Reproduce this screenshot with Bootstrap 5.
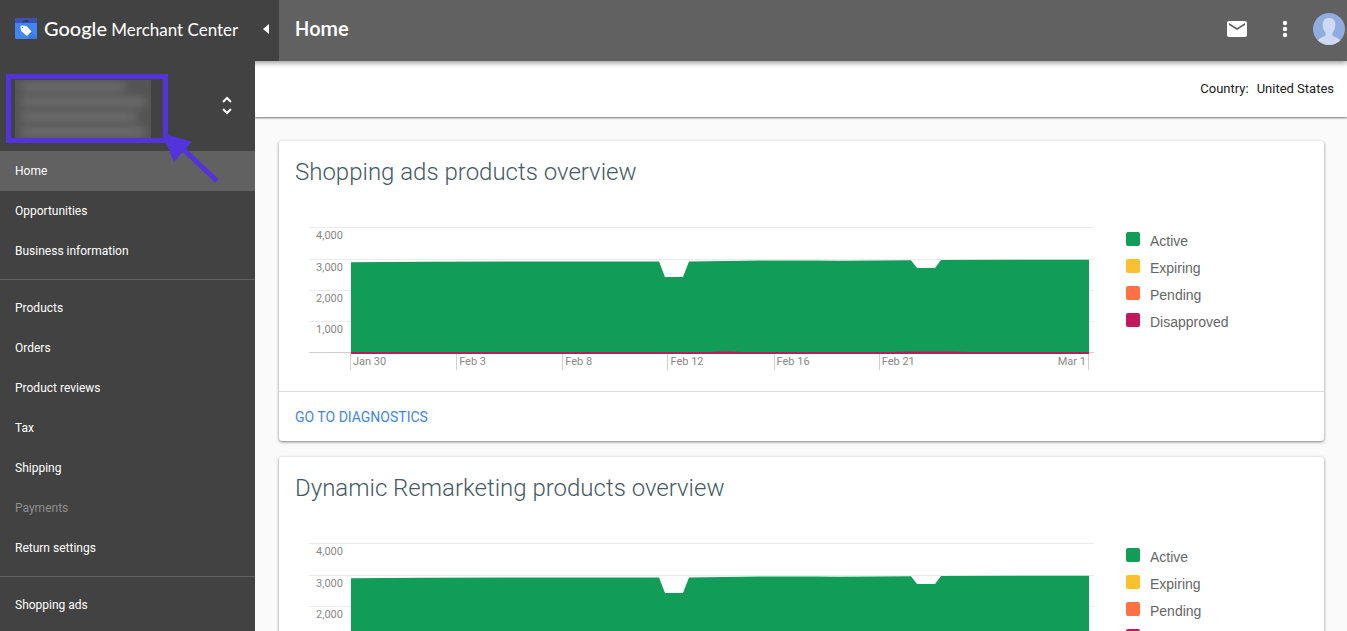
<!DOCTYPE html>
<html lang="en">
<head>
<meta charset="utf-8">
<meta name="viewport" content="width=device-width, initial-scale=1">
<title>Google Merchant Center</title>
<link rel="stylesheet" href="https://cdn.jsdelivr.net/npm/bootstrap@5.3.0/dist/css/bootstrap.min.css">
<style>
  body { font-family: Roboto, "Liberation Sans", sans-serif; font-size: 12px; line-height: 16px; background: #fafafa; color: #212121; }
  svg { display: block; }

  .topbar { background: #616161; height: 61px; z-index: 3; box-shadow: 0 2px 5px rgba(0,0,0,.4); }
  .brand-box { background: #424242; width: 279px; padding: 0 9px 4px 15px; }
  .brand-link { font-family: Lato, "Liberation Sans", sans-serif; font-size: 17px; line-height: 24px; color: #fff; gap: 7px; }
  .brand-link b { font-size: 20px; font-weight: 500; }
  .page-title { font-size: 20px; line-height: 24px; font-weight: 500; color: #fff; }
  .plain-btn { border: 0; background: none; padding: 0; color: #fff; }
  .tools { gap: 16px; padding-right: 2px; }

  .sidebar { background: #424242; width: 255px; z-index: 4; }
  .account { height: 90px; width: 100%; padding-left: 6px; padding-right: 22px; }
  .account-name { width: 162px; height: 69px; border: 5px solid #5333db; padding: 1px 14px 0 4px; }
  .redacted { background: #545454; height: 58px; width: 136px; overflow: hidden; padding: 3px 6px; }
  .redacted i { display: block; height: 8px; margin-bottom: 7px; background: #737373; filter: blur(5px); }
  .redacted i:first-child { margin-right: 20px; }
  .redacted i:nth-child(3) { margin-right: 8px; }
  .callout { position: absolute; left: 160px; top: 70px; z-index: 5; pointer-events: none; }
  .side-link { height: 40px; padding: 0 15px; color: #fff; font-weight: 400; display: flex; align-items: center; }
  .side-link:hover { color: #fff; background: #505050; }
  .side-link.active { background: #616161; }
  .side-link.disabled { color: #8e8e8e; }
  .side-rule { border: 0; border-top: 1px solid #616161; opacity: 1; margin: 8px 0; }

  .content { scrollbar-width: none; }
  .content::-webkit-scrollbar { display: none; }
  .country-bar { height: 56px; background: #fff; padding-right: 13px; font-size: 13px; gap: 8px; box-shadow: 0 1px 2px rgba(0,0,0,.55); }
  .cards { padding: 24px 23px 24px 24px; gap: 16px; }
  .panel { border: 0; border-radius: 3px; box-shadow: 0 1px 3px rgba(0,0,0,.5); }
  .panel-title { font-size: 24px; line-height: 32px; font-weight: 300; color: #455a64; margin: 0; padding: 15px 16px 0; }
  .panel-main { padding: 39px 0 25px 30px; gap: 32px; }
  .panel-foot { border-top: 1px solid #dcdcdc; padding: 17px 16px 16px; font-size: 14px; }
  .panel-foot a { color: #4285f4; text-decoration: none; }

  .chart { display: grid; grid-template-columns: 42px 1fr 5px; grid-template-rows: 32px repeat(3, 31px) 14px; font-size: 11px; color: #888; }
  .gridline { grid-column: 1 / 4; border-top: 1px solid #ebebeb; }
  .gridline:nth-child(1) { grid-row: 1; }
  .gridline:nth-child(2) { grid-row: 2; }
  .gridline:nth-child(3) { grid-row: 3; }
  .gridline:nth-child(4) { grid-row: 4; }
  .gridline span { display: block; width: 34px; text-align: right; }
  .baseline { grid-row: 5; grid-column: 1 / 4; border-top: 1px solid #d0d0d0; }
  .area { grid-row: 1 / 6; grid-column: 2; width: 100%; height: 127px; }
  .ticks { grid-row: 5; grid-column: 2; display: grid; grid-template-columns: 106fr 106fr 105fr 106fr 105fr 210fr; margin: 2px 0 0 -1px; line-height: 16px; height: 12px; }
  .ticks > div { border-left: 1px solid #d0d0d0; padding-left: 2px; white-space: nowrap; }
  .ticks > div:last-child { border-right: 1px solid #d0d0d0; padding-right: 2px; }

  .legend-list { width: 198px; padding-top: 1px; font-family: "Liberation Sans", Arial, sans-serif; font-size: 14px; color: #666; }
  .legend-list li { display: flex; gap: 10px; line-height: 27px; }
  .swatch { width: 14px; height: 14px; border-radius: 2px; margin-top: 4px; }
  .c-active { background: #119d58; } .c-expiring { background: #fbc02d; }
  .c-pending { background: #ff7043; } .c-disapproved { background: #c2185b; }
</style>
</head>
<body>
<div class="vh-100 d-flex flex-column overflow-hidden">
  <header class="topbar d-flex flex-shrink-0 position-relative">
    <div class="brand-box d-flex align-items-center justify-content-between flex-shrink-0">
      <a class="brand-link d-flex align-items-center text-decoration-none text-nowrap" href="#">
        <svg width="22" height="22" viewBox="0 0 22 22" aria-hidden="true">
          <rect width="22" height="21" rx="1.5" fill="#4285f4"/>
          <path d="M1.5 0h19A1.5 1.5 0 0 1 22 1.5V5H0V1.5A1.5 1.5 0 0 1 1.5 0z" fill="#3f51b5"/>
          <path d="M8 4V3h1.500V2h3v1H14v1z" fill="#333a55"/>
          <path d="M15.500 13.500L22 19v2H13z" fill="#3b78e7"/>
          <path d="M5.500 8.500q0-1 1-1l5 .5 5 5.500-4.500 4.500-6-5z" fill="#fff"/>
          <circle cx="7.500" cy="9.500" r=".7" fill="#4285f4"/>
        </svg>
        <span><b>Google</b> Merchant Center</span>
      </a>
      <button class="plain-btn" type="button" aria-label="Collapse menu">
        <svg width="7" height="10" viewBox="0 0 7 10"><path d="M6 0v10L0 5z" fill="#fff"/></svg>
      </button>
    </div>
    <div class="d-flex flex-grow-1 align-items-center justify-content-between ps-3 pb-1">
      <h1 class="page-title m-0">Home</h1>
      <div class="tools d-flex align-items-center">
        <button class="plain-btn me-2" type="button" aria-label="Messages">
          <svg width="24" height="24" viewBox="0 0 24 24"><path fill="#fff" d="M20 4H4c-1.100 0-1.990.9-1.990 2L2 18c0 1.100.9 2 2 2h16c1.100 0 2-.9 2-2V6c0-1.100-.9-2-2-2zm0 4l-8 5-8-5V6l8 5 8-5v2z"/></svg>
        </button>
        <button class="plain-btn" type="button" aria-label="More options">
          <svg width="24" height="24" viewBox="0 0 24 24" fill="#fff"><circle cx="12" cy="6" r="2.200"/><circle cx="12" cy="12" r="2.200"/><circle cx="12" cy="18" r="2.200"/></svg>
        </button>
        <button class="plain-btn" type="button" aria-label="Account">
          <svg width="32" height="32" viewBox="0 0 32 32">
            <circle cx="16" cy="16" r="16" fill="#91acdf"/>
            <path d="M16 5c4.500 0 6.500 3 6.300 7-.1 3.500-1.300 6-2.800 7.600v3c0 1 4.500 1.600 7.900 4.700A16 16 0 0 1 16 32a16 16 0 0 1-11.400-4.700C8 24.200 12.500 23.600 12.500 22.600v-3C11 18 9.800 15.500 9.700 12 9.500 8 11.500 5 16 5z" fill="#cedaf2"/>
          </svg>
        </button>
      </div>
    </div>
  </header>

  <div class="d-flex flex-grow-1 overflow-hidden">
    <nav class="sidebar flex-shrink-0 position-relative" aria-label="Main">
      <button class="plain-btn account d-flex align-items-center justify-content-between" type="button" aria-label="Switch account">
        <span class="account-name d-block mt-1"><span class="redacted d-block"><i></i><i></i><i></i><i></i></span></span>
        <svg width="12" height="20" viewBox="0 0 12 20" fill="none" stroke="#fff" stroke-width="2"><path d="M2 6l4-4 4 4M2 13l4 4 4-4"/></svg>
      </button>
      <svg class="callout" width="60" height="54" viewBox="0 0 60 54" aria-hidden="true"><path d="M22 17L57 50" stroke="#5333db" stroke-width="5"/><path d="M2 2.500L32 10.500 14 31z" fill="#5333db"/></svg>
      <div class="nav flex-column flex-nowrap">
        <a class="side-link active text-decoration-none" href="#">Home</a>
        <a class="side-link text-decoration-none" href="#">Opportunities</a>
        <a class="side-link text-decoration-none" href="#">Business information</a>
        <hr class="side-rule">
        <a class="side-link text-decoration-none" href="#">Products</a>
        <a class="side-link text-decoration-none" href="#">Orders</a>
        <a class="side-link text-decoration-none" href="#">Product reviews</a>
        <a class="side-link text-decoration-none" href="#">Tax</a>
        <a class="side-link text-decoration-none" href="#">Shipping</a>
        <a class="side-link disabled text-decoration-none" href="#" aria-disabled="true">Payments</a>
        <a class="side-link text-decoration-none" href="#">Return settings</a>
        <hr class="side-rule">
        <a class="side-link text-decoration-none" href="#">Shopping ads</a>
      </div>
    </nav>

    <main class="content flex-grow-1 overflow-auto">
      <div class="country-bar d-flex align-items-center justify-content-end"><span>Country:</span><span>United States</span></div>
      <div class="cards d-flex flex-column">
        <section class="card panel">
          <h2 class="panel-title">Shopping ads products overview</h2>
          <div class="panel-main d-flex">
            <div class="chart flex-grow-1">
              <div class="gridline"><span>4,000</span></div>
              <div class="gridline"><span>3,000</span></div>
              <div class="gridline"><span>2,000</span></div>
              <div class="gridline"><span>1,000</span></div>
              <div class="baseline"></div>
              <svg class="area" viewBox="0 0 738 127" preserveAspectRatio="none" aria-hidden="true">
                <path fill="#119d58" d="M0 35.200L73 34.800 195 34.400H308L314 50H332L338 34.400 357 34.200 409 33.600H465L487 33.800 560 33.200 566 41H584L590 33 738 32.700V126H0z"/>
                <path fill="#c2185b" d="M0 125H360L368 124.500H380L390 125H540L560 124.500H600L620 125H738V127H0z"/>
              </svg>
              <div class="ticks">
                <div>Jan 30</div><div>Feb 3</div><div>Feb 8</div><div>Feb 12</div><div>Feb 16</div>
                <div class="d-flex justify-content-between"><span>Feb 21</span><span>Mar 1</span></div>
              </div>
            </div>
            <ul class="legend-list list-unstyled m-0 flex-shrink-0">
              <li><span class="swatch c-active"></span>Active</li>
              <li><span class="swatch c-expiring"></span>Expiring</li>
              <li><span class="swatch c-pending"></span>Pending</li>
              <li><span class="swatch c-disapproved"></span>Disapproved</li>
            </ul>
          </div>
          <div class="panel-foot"><a href="#">GO TO DIAGNOSTICS</a></div>
        </section>

        <section class="card panel">
          <h2 class="panel-title">Dynamic Remarketing products overview</h2>
          <div class="panel-main d-flex">
            <div class="chart flex-grow-1">
              <div class="gridline"><span>4,000</span></div>
              <div class="gridline"><span>3,000</span></div>
              <div class="gridline"><span>2,000</span></div>
              <div class="gridline"></div>
              <div class="baseline"></div>
              <svg class="area" viewBox="0 0 738 127" preserveAspectRatio="none" aria-hidden="true">
                <path fill="#119d58" d="M0 35.200L73 34.800 195 34.400H308L314 50H332L338 34.400 357 34.200 409 33.600H465L487 33.800 560 33.200 566 41H584L590 33 738 32.700V126H0z"/>
                <path fill="#c2185b" d="M0 125H738V127H0z"/>
              </svg>
            </div>
            <ul class="legend-list list-unstyled m-0 flex-shrink-0">
              <li><span class="swatch c-active"></span>Active</li>
              <li><span class="swatch c-expiring"></span>Expiring</li>
              <li><span class="swatch c-pending"></span>Pending</li>
              <li><span class="swatch c-disapproved"></span></li>
            </ul>
          </div>
        </section>
      </div>
    </main>
  </div>
</div>
<script src="https://cdn.jsdelivr.net/npm/bootstrap@5.3.0/dist/js/bootstrap.bundle.min.js"></script>
</body>
</html>
